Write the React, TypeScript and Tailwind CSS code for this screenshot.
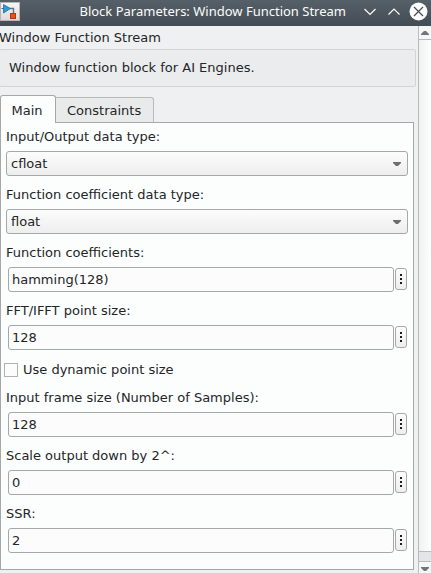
import { useState } from "react";
import type { ReactNode } from "react";

type FieldProps = { id: string; label: string; children: ReactNode };

function Field({ id, label, children }: FieldProps) {
  return (
    <div className="flex flex-col gap-[5px]">
      <label htmlFor={id} className="leading-[18px]">
        {label}
      </label>
      {children}
    </div>
  );
}

function SelectField({ id, label, options }: { id: string; label: string; options: string[] }) {
  return (
    <Field id={id} label={label}>
      <div className="relative">
        <select
          id={id}
          className="block h-[25px] w-full appearance-none rounded-[3px] border border-[#a5a7a8] bg-linear-to-b from-[#fcfcfc] to-[#eeeeee] px-1 leading-4 outline-none"
        >
          {options.map((o) => (
            <option key={o}>{o}</option>
          ))}
        </select>
        <svg
          viewBox="0 0 8 4"
          className="pointer-events-none absolute top-[11px] right-[7px] h-1 w-2"
          aria-hidden="true"
        >
          <path d="M0 0h8v1L5 4H3L0 1z" fill="#6b6d6e" />
        </svg>
      </div>
    </Field>
  );
}

function TextField({ id, label, value }: { id: string; label: string; value: string }) {
  return (
    <Field id={id} label={label}>
      <div className="flex items-start gap-px pr-px pl-0.5">
        <input
          id={id}
          type="text"
          defaultValue={value}
          className="h-[25px] min-w-0 flex-1 rounded-[3px] border border-[#a5a7a8] bg-[#fcfcfc] px-[3px] leading-4 outline-none"
        />
        <button
          type="button"
          aria-label={`${label} options`}
          className="mt-px flex h-[22px] w-3 shrink-0 flex-col items-center justify-center gap-0.5 rounded-[3px] border border-[#a5a7a8] bg-linear-to-b from-[#fcfcfc] to-[#eeeeee]"
        >
          <span className="size-0.5 bg-[#1c1c1c]" />
          <span className="size-0.5 bg-[#1c1c1c]" />
          <span className="size-0.5 bg-[#1c1c1c]" />
        </button>
      </div>
    </Field>
  );
}

function AppIcon() {
  return (
    <svg viewBox="0 0 20 20" className="size-5" aria-hidden="true">
      <defs>
        <linearGradient id="tile" x1="0" y1="0" x2="0" y2="1">
          <stop offset="0" stopColor="#f6f6f6" />
          <stop offset="1" stopColor="#dcdcdc" />
        </linearGradient>
      </defs>
      <rect x="0.5" y="1.5" width="19" height="18" fill="url(#tile)" stroke="#b9b4b2" />
      <path d="M10 7.5h3.5V13" fill="none" stroke="#66717a" strokeWidth="1.4" />
      <path d="M1.5 7.5h3" stroke="#3c6c8c" strokeWidth="1" />
      <path d="M3.5 3.5v8.5l7-4.5z" fill="#3399cc" stroke="#256f9e" strokeWidth="0.8" />
      <rect x="10.5" y="12.5" width="5" height="5" fill="#e2551f" stroke="#a83a18" />
    </svg>
  );
}

function TitleBar() {
  return (
    <header className="flex h-[26px] items-center bg-linear-to-b from-[#566068] to-[#434c54] pr-[3px] font-['Noto_Sans','DejaVu_Sans',sans-serif] text-[#fcfcfc]">
      <div className="flex h-full flex-1 items-start justify-between pt-px">
        <AppIcon />
        <h1 className="text-[13px] leading-5 whitespace-nowrap">Block Parameters: Window Function Stream</h1>
      </div>
      <div className="flex shrink-0 items-center gap-[5px] pb-1 pl-[15px]">
        <button type="button" aria-label="Minimize" className="size-[19px]">
          <svg viewBox="0 0 19 19" fill="none" stroke="#fcfcfc" strokeWidth="1.2">
            <path d="M3.5 7L9 12.5 14.5 7" />
          </svg>
        </button>
        <button type="button" aria-label="Maximize" className="size-[19px]">
          <svg viewBox="0 0 19 19" fill="none" stroke="#fcfcfc" strokeWidth="1.2">
            <path d="M3.5 12.5L9 7l5.5 5.5" />
          </svg>
        </button>
        <button type="button" aria-label="Close" className="size-[19px]">
          <svg viewBox="0 0 19 19" fill="none">
            <circle cx="9.5" cy="9.5" r="9" fill="#fcfcfc" />
            <path d="M5 5l9 9M14 5l-9 9" stroke="#434c54" strokeWidth="1.2" />
          </svg>
        </button>
      </div>
    </header>
  );
}

function ScrollRail() {
  return (
    <aside className="flex w-[13px] shrink-0 flex-col border-l border-[#b9babb] bg-linear-to-r from-[#f0f2f2] to-[#fdfefe]">
      <button
        type="button"
        aria-label="Scroll up"
        className="flex h-3.5 items-center justify-center border-b border-[#b9babb] bg-[#f6f7f7]"
      >
        <svg viewBox="0 0 8 4" className="h-1 w-2">
          <path d="M0 4V3l3-3h2l3 3v1z" fill="#737576" />
        </svg>
      </button>
      <div className="flex-1" />
      <div className="h-[11px] border-y border-[#b9babb] bg-[#e4e5e6]" />
      <button
        type="button"
        aria-label="Scroll down"
        className="flex h-[11px] items-center justify-center bg-[#f6f7f7] pt-[3px]"
      >
        <svg viewBox="0 0 8 4" className="h-1 w-2">
          <path d="M0 0h8v1L5 4H3L0 1z" fill="#737576" />
        </svg>
      </button>
    </aside>
  );
}

export default function App() {
  const [dynamic, setDynamic] = useState(false);
  return (
    <div className="flex min-h-screen flex-col bg-[#eff0f1] font-['DejaVu_Sans',sans-serif] text-[13px] text-[#232627]">
      <TitleBar />
      <div className="flex flex-1">
        <main className="min-w-0 flex-1 pr-1 pb-[3px]">
          <h2 className="-ml-px pt-1 leading-4">Window Function Stream</h2>
          <div className="mt-[3px] -mr-0.5 -ml-px flex h-[38px] items-center rounded-[2px] border border-[#d3d4d5] bg-[#ebecee] pl-[9px] leading-4">
            Window function block for AI Engines.
          </div>
          <div role="tablist" className="mt-2 flex items-end">
            <button
              type="button"
              role="tab"
              aria-selected="true"
              className="relative -mb-px h-7 w-14 rounded-t-[3px] border border-b-0 border-[#a5a7a8] bg-[#fcfefe] pt-0.5 pr-0.5"
            >
              Main
            </button>
            <button
              type="button"
              role="tab"
              aria-selected="false"
              className="h-[25px] rounded-tr-[3px] border border-b-0 border-l-0 border-[#b9babb] bg-[#e9ebeb] pt-0.5 pr-3 pl-[11px]"
            >
              Constraints
            </button>
          </div>
          <form
            role="tabpanel"
            className="flex flex-col gap-2.5 border border-[#a5a7a8] bg-[#fcfefe] px-[5px] pt-[5px] pb-4"
          >
            <SelectField id="io-type" label="Input/Output data type:" options={["cfloat", "cint16", "cint32"]} />
            <SelectField id="coef-type" label="Function coefficient data type:" options={["float", "int16", "int32"]} />
            <TextField id="coefs" label="Function coefficients:" value="hamming(128)" />
            <TextField id="points" label="FFT/IFFT point size:" value="128" />
            <label className="-ml-0.5 flex h-[19px] items-center gap-[5px] leading-4">
              <input
                type="checkbox"
                checked={dynamic}
                onChange={(e) => setDynamic(e.target.checked)}
                className="size-3.5 appearance-none border border-[#b0b2b3] bg-[#fcfcfc] checked:bg-[#3daee9]"
              />
              Use dynamic point size
            </label>
            <TextField id="frame" label="Input frame size (Number of Samples):" value="128" />
            <TextField id="scale" label="Scale output down by 2^:" value="0" />
            <TextField id="ssr" label="SSR:" value="2" />
          </form>
        </main>
        <ScrollRail />
      </div>
    </div>
  );
}
